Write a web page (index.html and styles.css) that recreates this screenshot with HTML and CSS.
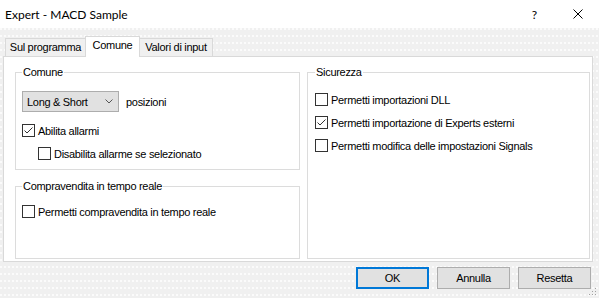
FILE: index.html
```html
<!DOCTYPE html>
<html lang="it">

<head>
    <meta charset="UTF-8">
    <meta name="viewport" content="width=device-width, initial-scale=1.0">
    <title>Expert - MACD Sample</title>
    <link rel="stylesheet" href="styles.css">
</head>

<body>
    <div class="window">
        <div class="titlebar">
            <span class="title">Expert - MACD Sample</span>
            <span class="help">?</span>
            <span class="close">
                <svg width="10" height="10" viewBox="0 0 10 10">
                    <path d="M0.5 0.5 L9.5 9.5 M9.5 0.5 L0.5 9.5" stroke="#000" stroke-width="1" fill="none"/>
                </svg>
            </span>
        </div>

        <div class="tabs">
            <div class="tab tab-first">Sul programma</div>
            <div class="tab active">Comune</div>
            <div class="tab tab-last">Valori di input</div>
        </div>

        <div class="panel">
            <div class="col-left">
                <fieldset class="group group-common">
                    <legend>Comune</legend>
                    <div class="select-row">
                        <div class="select">
                            <span>Long &amp; Short</span>
                            <svg width="8" height="5" viewBox="0 0 8 5">
                                <path d="M0.5 0.5 L4 4 L7.5 0.5" stroke="#555" stroke-width="1" fill="none"/>
                            </svg>
                        </div>
                        <span>posizioni</span>
                    </div>
                    <label class="check row-alarm">
                        <span class="box">
                            <svg width="11" height="11" viewBox="0 0 11 11">
                                <path d="M1.5 5.5 L4 8 L9.5 2.5" stroke="#333" stroke-width="1" fill="none"/>
                            </svg>
                        </span>
                        <span>Abilita allarmi</span>
                    </label>
                    <label class="check row-indent">
                        <span class="box"></span>
                        <span>Disabilita allarme se selezionato</span>
                    </label>
                </fieldset>

                <fieldset class="group group-live">
                    <legend>Compravendita in tempo reale</legend>
                    <label class="check">
                        <span class="box"></span>
                        <span>Permetti compravendita in tempo reale</span>
                    </label>
                </fieldset>
            </div>

            <fieldset class="group group-security">
                <legend>Sicurezza</legend>
                <label class="check">
                    <span class="box"></span>
                    <span>Permetti importazioni DLL</span>
                </label>
                <label class="check">
                    <span class="box">
                        <svg width="11" height="11" viewBox="0 0 11 11">
                            <path d="M1.5 5.5 L4 8 L9.5 2.5" stroke="#333" stroke-width="1" fill="none"/>
                        </svg>
                    </span>
                    <span>Permetti importazione di Experts esterni</span>
                </label>
                <label class="check">
                    <span class="box"></span>
                    <span>Permetti modifica delle impostazioni Signals</span>
                </label>
            </fieldset>
        </div>

        <div class="buttons">
            <button type="button" class="btn btn-default">OK</button>
            <button type="button" class="btn">Annulla</button>
            <button type="button" class="btn">Resetta</button>
        </div>

        <svg class="grip" width="8" height="8" viewBox="0 0 8 8">
            <rect x="6" y="0" width="1" height="1" fill="#a0a0a0"/>
            <rect x="3" y="3" width="1" height="1" fill="#a0a0a0"/>
            <rect x="6" y="3" width="1" height="1" fill="#a0a0a0"/>
            <rect x="0" y="6" width="1" height="1" fill="#a0a0a0"/>
            <rect x="3" y="6" width="1" height="1" fill="#a0a0a0"/>
            <rect x="6" y="6" width="1" height="1" fill="#a0a0a0"/>
        </svg>
    </div>
</body>

</html>
```

FILE: styles.css
```css
/* styles.css */
html,
body {
    margin: 0;
    padding: 0;
}

body {
    font-family: "Liberation Sans", Arial, sans-serif;
    font-size: 11px;
    letter-spacing: -0.3px;
    color: #000;
}

.window {
    position: relative;
    width: 599px;
    height: 298px;
    overflow: hidden;
    background-color: #f0f0f0;
    background-image: radial-gradient(circle at 1px 1px, #fbfbfb 0.8px, transparent 1px);
    background-size: 4px 7px;
}

/* title bar */
.titlebar {
    height: 28px;
    background: #fff;
    display: flex;
    align-items: center;
    padding-left: 5px;
    letter-spacing: 0;
}

.title {
    font-family: Lato, "Noto Sans", sans-serif;
    font-size: 12px;
    flex: 1;
}

.help {
    font-family: Lato, "Noto Sans", sans-serif;
    font-size: 12px;
    margin-right: 36px;
}

.close {
    display: flex;
    margin-right: 16px;
}

/* tabs */
.tabs {
    display: flex;
    align-items: flex-end;
    height: 20px;
    margin-top: 8px;
    padding-left: 5px;
}

.tab {
    height: 18px;
    box-sizing: border-box;
    border: 1px solid #d9d9d9;
    border-bottom: none;
    background: #f0f0f0;
    text-align: center;
    line-height: 16px;
}

.tab-first {
    width: 81px;
}

.tab.active {
    position: relative;
    z-index: 1;
    width: 55px;
    height: 21px;
    margin-left: -1px;
    margin-bottom: -1px;
    background: #fff;
    line-height: 16px;
}

.tab-last {
    width: 74px;
    margin-left: -1px;
}

/* panel */
.panel {
    margin-left: 3px;
    width: 590px;
    height: 206px;
    box-sizing: border-box;
    border: 1px solid #d9d9d9;
    background: #fff;
    padding: 9px 2px 2px 11px;
    display: grid;
    grid-template-columns: 285px 283px;
    column-gap: 7px;
}

.col-left {
    display: flex;
    flex-direction: column;
    gap: 10px;
}

.group {
    margin: 0;
    min-width: 0;
    box-sizing: border-box;
    border: 1px solid #dcdcdc;
    padding: 0 6px;
}

.group legend {
    padding: 0 1px;
    line-height: 13px;
}

.group-common {
    height: 104px;
    padding-top: 12px;
}

.group-live {
    flex: 1;
    padding-top: 12px;
}

.group-security {
    padding-left: 7px;
    padding-top: 14px;
}

/* select */
.select-row {
    display: flex;
    align-items: center;
    gap: 7px;
}

.select {
    width: 97px;
    height: 21px;
    box-sizing: border-box;
    border: 1px solid #adadad;
    background: #e1e1e1;
    display: flex;
    align-items: center;
    justify-content: space-between;
    padding: 0 5px 0 4px;
}

/* checkboxes */
.check {
    display: flex;
    align-items: center;
    gap: 3px;
    height: 13px;
    margin-bottom: 10px;
}

.row-alarm {
    margin-top: 12px;
}

.row-indent {
    margin-left: 16px;
}

.box {
    width: 13px;
    height: 13px;
    box-sizing: border-box;
    border: 1px solid #333;
    background: #fff;
    display: flex;
}

/* buttons */
.buttons {
    display: flex;
    justify-content: flex-end;
    gap: 8px;
    margin-top: 5px;
    padding-right: 8px;
}

.btn {
    width: 73px;
    height: 22px;
    box-sizing: border-box;
    border: 1px solid #adadad;
    background: #e1e1e1;
    font-family: "Liberation Sans", Arial, sans-serif;
    font-size: 11px;
    letter-spacing: -0.3px;
    color: #000;
    padding: 0;
}

.btn-default {
    border: 2px solid #0078d7;
}

.grip {
    position: absolute;
    right: 2px;
    bottom: 2px;
}
```
